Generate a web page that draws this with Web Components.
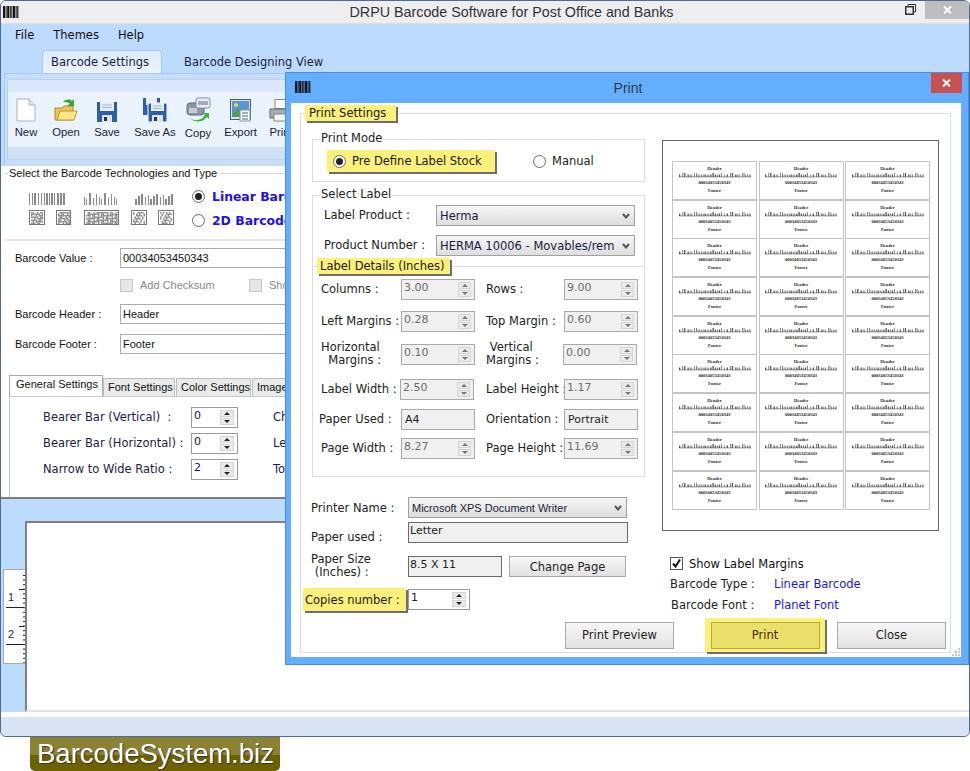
<!DOCTYPE html>
<html lang="en">
  <head>
    <meta charset="UTF-8" />
    <title>DRPU Barcode Software for Post Office and Banks</title>
    <style>
      body { margin: 0; background: #fff; overflow: hidden; }
    </style>
  </head>
  <body>
    <app-window></app-window>
    <site-mark>BarcodeSystem.biz</site-mark>
    <print-dialog></print-dialog>

    <script>
      const part = (tag, render) =>
        customElements.define(
          tag,
          class extends HTMLElement {
            connectedCallback() {
              if (this.shadowRoot) return
              this.attachShadow({ mode: 'open' }).innerHTML = render(this)
            }
          },
        )
      const VERDANA = '"DejaVu Sans", sans-serif'
      const TAHOMA = '"Liberation Sans", sans-serif'

      part('bar-mark', () => {
        let bars = ''
        let widths = [2, 1, 2, 1, 1, 2, 1, 1, 2, 1, 1]
        let x = 0
        for (let w of widths) {
          bars += `<rect x="${x}" width="${w}" height="12"/>`
          x += w + 0.6
        }
        return `<style>:host{display:inline-flex}</style>
          <svg width="16" height="12" viewBox="0 0 16 12" fill="#111">${bars}</svg>`
      })

      part('win-close', () => `<style>
          :host{display:flex;align-items:center;justify-content:center;width:var(--w,31px);height:var(--h,20px);background:var(--bg,#c75050)}
        </style>
        <svg width="9" height="8" viewBox="0 0 9 8"><path d="M1 0.5L8 7.5M8 0.5L1 7.5" stroke="#fff" stroke-width="2"/></svg>`)

      part('tool-button', el => `<style>
          :host{display:flex;flex-direction:column;align-items:center;width:${el.getAttribute('w')}px;flex:none;overflow:visible}
          .icon{height:26px;display:flex;align-items:flex-end;justify-content:center}
          .text{margin-top:${el.getAttribute('gap') || 3}px;font:11.3px/15px ${TAHOMA};color:#1b1b3a;white-space:nowrap}
        </style>
        <div class="icon"><slot name="icon"></slot></div>
        <div class="text">${el.getAttribute('label')}</div>`)

      // small grey symbology previews in the barcode type chooser
      part('bar-sample', el => {
        let w = +el.getAttribute('w')
        let kind = el.getAttribute('kind')
        let seed = +el.getAttribute('seed') || 3
        let shapes = ''
        let next = () => (seed = (seed * 7 + 5) % 31)
        if (kind === 'linear') {
          let x = 0
          while (x < w) {
            let bw = 1 + (next() % 2)
            let h = el.hasAttribute('uneven') ? 6 + (next() % 7) : 12
            shapes += `<rect x="${x}" y="${12 - h}" width="${bw}" height="${h}"/>`
            x += bw + 1 + (next() % 2)
          }
          return `<style>:host{display:block;height:12px}svg{display:block}</style>
            <svg width="${w}" height="12" fill="#8a8a8a">${shapes}</svg>`
        }
        for (let y = 2; y < 13; y += 1.5) {
          for (let x = 2; x < w - 2; x += 1.5) {
            if (next() % 3) shapes += `<rect x="${x}" y="${y}" width="1.5" height="1.5"/>`
          }
        }
        return `<style>:host{display:block;height:15px}svg{display:block}</style>
          <svg width="${w}" height="15" fill="#8a8a8a"><rect x=".5" y=".5" width="${w - 1}" height="14" fill="#fff" stroke="#777"/>${shapes}</svg>`
      })

      part('radio-dot', el => `<style>
          :host{display:inline-flex;align-items:center;justify-content:center;box-sizing:border-box;width:13px;height:13px;border:1px solid #6a6a6a;border-radius:50%;background:#fff;flex:none}
          i{width:7px;height:7px;border-radius:50%;background:#222}
        </style>${el.hasAttribute('checked') ? '<i></i>' : ''}`)

      part('check-mark', el => `<style>
          :host{display:inline-flex;box-sizing:border-box;width:13px;height:13px;border:1px solid ${el.hasAttribute('checked') ? '#555' : '#c8c8c8'};background:${el.hasAttribute('checked') ? '#fff' : '#e6e6e6'};flex:none}
          svg{display:block}
        </style>${el.hasAttribute('checked') ? '<svg width="11" height="11" viewBox="0 0 11 11"><path d="M2 5.5L4.5 8.5L9 1.5" fill="none" stroke="#111" stroke-width="2"/></svg>' : ''}`)

      part('spin-box', el => {
        let off = el.hasAttribute('disabled')
        return `<style>
          :host{display:flex;box-sizing:border-box;width:${el.getAttribute('w') || 74}px;height:${el.getAttribute('h') || 21}px;border:1px solid ${off ? '#a9a9a9' : '#9a9a9a'};background:${off ? '#f0f0f0' : '#fff'};font:11px/14px ${VERDANA};color:${off ? '#6d6d6d' : '#20104a'}}
          .v{flex:1;padding:1px 1px 0 2px;overflow:hidden}
          .b{width:${off ? 13 : 14}px;margin:2px 3px 2px 0;display:flex;flex-direction:column;gap:1px}
          .b i{flex:1;display:flex;align-items:center;justify-content:center;background:#ebebeb;border:1px solid #d4d4d4;box-sizing:border-box}
          .u{border-left:3px solid transparent;border-right:3px solid transparent;border-bottom:3px solid ${off ? '#777' : '#222'}}
          .d{border-left:3px solid transparent;border-right:3px solid transparent;border-top:3px solid ${off ? '#777' : '#222'}}
        </style>
        <div class="v">${el.getAttribute('value')}</div>
        <div class="b"><i><span class="u"></span></i><i><span class="d"></span></i></div>`
      })

      part('combo-box', el => `<style>
          :host{display:flex;align-items:center;box-sizing:border-box;height:21px;width:${el.getAttribute('w')}px;border:1px solid #a0a0a0;background:linear-gradient(#f6f6f6,#dedede);font:${el.getAttribute('font') || `11.5px ${VERDANA}`};color:#1a1a3a}
          .v{flex:1;padding-left:3px;white-space:nowrap;overflow:hidden}
          svg{margin:0 4px 0 6px;flex:none}
        </style>
        <div class="v">${el.getAttribute('value')}</div>
        <svg width="8" height="6" viewBox="0 0 8 6"><path d="M1 1L4 4.5L7 1" fill="none" stroke="#555" stroke-width="2"/></svg>`)

      part('read-field', el => `<style>
          :host{display:block;box-sizing:border-box;height:21px;width:${el.getAttribute('w')}px;border:1px solid ${el.getAttribute('line') || '#6a6a6a'};background:#f0f0f0;padding:${el.getAttribute('pad') || '1px 1px'};font:11px/14px ${VERDANA};color:#222;white-space:nowrap}
        </style><slot></slot>`)

      part('push-button', el => `<style>
          :host{display:flex;align-items:center;justify-content:center;box-sizing:border-box;width:${el.getAttribute('w')}px;height:${el.getAttribute('h') || 27}px;border:1px solid #a8a8a8;background:linear-gradient(#f7f7f7,#e2e2e2);font:11.5px ${VERDANA};color:#222}
          :host([hot]){border-color:#b5a93c;background:#ece06c;color:#4a2a00}
        </style><slot></slot>`)

      // yellow call-out used in the screenshot to point at a control
      part('note-tag', el => `<style>
          :host{display:flex;align-items:center;box-sizing:border-box;width:fit-content;background:#fbf079;box-shadow:2px 2px 0 #6e6e6e;padding:${el.getAttribute('pad') || '0 4px'};height:${el.getAttribute('h') || 16}px;font:11.5px ${VERDANA};color:#1a1a1a;white-space:nowrap}
        </style><slot></slot>`)

      part('group-box', el => `<style>
          :host{display:block;box-sizing:border-box;border:1px solid #dcdcdc;background:#fff}
          .legend{width:fit-content;height:16px;margin:-9px 0 0 8px;padding:0 1px 0 0;background:#fff;font:11.5px/15px ${VERDANA};color:#222}
        </style>
        <div class="legend"><slot name="legend">${el.getAttribute('legend') || ''}</slot></div>
        <slot></slot>`)

      part('sheet-label', () => {
        let bars = ''
        let seed = 5
        for (let x = 0; x < 72; ) {
          seed = (seed * 7 + 3) % 23
          let w = seed % 3 ? 0.7 : 1.3
          bars += `<rect x="${x}" y="${seed % 4 ? 1.5 : 0}" width="${w}" height="${seed % 4 ? 2.5 : 4}"/>`
          x += w + 0.7 + (seed % 5 === 0 ? 1.4 : 0.3)
        }
        return `<style>
          :host{display:flex;flex-direction:column;align-items:center;box-sizing:border-box;border:1px solid #c4c4c4;height:39px;font:bold 4.6px/6px "Liberation Serif",serif;color:#222;padding-top:4px}
          svg{display:block;margin:1px 0 2px}
          .n{margin-bottom:2px}
        </style>
        <div>Header</div>
        <svg width="72" height="5" fill="#555"><rect y="3.4" width="72" height="1" fill="#999"/>${bars}</svg>
        <div class="n">00034053450343</div>
        <div>Footer</div>`
      })

      part('label-sheet', () => `<style>
          :host{display:block;box-sizing:border-box;width:277px;height:391px;border:1px solid #666;background:#fff;padding:20px 0 0 9px}
          .grid{display:grid;grid-template-columns:repeat(3,85px);column-gap:1.5px;grid-auto-rows:38.7px}
        </style>
        <div class="grid">${'<sheet-label></sheet-label>'.repeat(27)}</div>`)

      part('ruler-strip', () => {
        let ticks = ''
        for (let y = 5; y < 94; y += 4.6) ticks += `<rect x="19" y="${y}" width="2" height="1"/>`
        return `<style>:host{display:block;box-sizing:border-box;width:22px;height:95px;border:1px solid #aaa;border-right:0;background:#fff;flex:none}svg{display:block}</style>
          <svg width="21" height="93" font-family="Liberation Sans, sans-serif" font-size="11" fill="#222">
            ${ticks}
            <rect x="15" y="19" width="5" height="1"/><rect x="15" y="56" width="5" height="1"/>
            <rect x="2" y="37" width="18" height="1"/><rect x="2" y="74" width="18" height="1"/>
            <text x="4" y="31">1</text><text x="4" y="68">2</text>
          </svg>`
      })

      part('site-mark', () => `<style>
          :host{display:block;box-sizing:border-box;width:250px;height:34px;margin-left:30px;padding-left:7px;border-radius:0 0 5px 5px;background:linear-gradient(#8b8233 0 53%,#6e6200 53%);font:27.5px/33px ${TAHOMA};color:#fff;text-shadow:1px 1px 1px #333}
        </style><slot></slot>`)

      part('settings-pane', () => `<style>
          :host{display:block;box-sizing:border-box;height:333px;background:#fff;border-bottom:2px solid #7f7f7f;font:11px ${TAHOMA};color:#222;overflow:hidden;position:relative}
          .type{box-sizing:border-box;height:75px;border-bottom:2px solid #e6e6e6;margin-left:4px;padding-top:7px;border-top:0}
          .legend{display:flex;align-items:center;height:0;font:11px ${TAHOMA};color:#111}
          .legend span{padding:0 3px 0 1px}
          .legend i{flex:1;height:1px;background:#d5d5d5}
          .legend b{width:3px;height:1px;background:#d5d5d5}
          .choices{display:flex;margin:20px 0 0 24px}
          .samples{width:164px}
          .s-row{display:flex;margin-bottom:5px}
          .kinds{margin:-6px 0 0 -1px;font:bold 12.4px ${VERDANA};color:#1c10f0}
          .kinds div{display:flex;align-items:center;gap:7px;height:18px;margin-bottom:6px;white-space:nowrap}
          .fields{display:grid;grid-template-columns:105px 1fr;padding:7px 0 0 14px;font-size:11px}
          .label{height:20px;line-height:20px;color:#111}
          .input{box-sizing:border-box;height:20px;width:400px;border:1px solid #acacac;padding:0 2px;line-height:18px;color:#111}
          .checks{display:flex;align-items:center;height:24px;margin:5px 0 7px;color:#888}
          .checks check-mark{margin-right:7px}
          .gap{margin-bottom:10px}
          .tabs{display:flex;align-items:flex-end;height:21px;margin:21px 0 0 8px;font:11px ${TAHOMA};color:#111}
          .tab{box-sizing:border-box;height:18px;background:#eaeaea;border:1px solid #bdbdbd;border-bottom:0;margin-right:1px;padding:2px 4px;white-space:nowrap}
          .tab.on{height:21px;width:94px;background:#fff;border-color:#aaa;margin-right:0;padding:2px 6px}
          .panel{height:110px;margin-left:8px;border-left:1px solid #c8c8c8;border-top:1px solid #c8c8c8;padding:10px 0 0 33px;font:11.5px/20px ${VERDANA};color:#231a44;display:grid;grid-template-columns:148px 82px 60px;grid-auto-rows:26px;white-space:nowrap}
        </style>
        <div class="type">
          <div class="legend"><b></b><span>Select the Barcode Technologies and Type</span><i></i></div>
          <div class="choices">
            <div class="samples">
              <div class="s-row" style="gap:18px">
                <bar-sample kind="linear" w="37" seed="4"></bar-sample>
                <bar-sample kind="linear" w="33" seed="9" uneven></bar-sample>
                <bar-sample kind="linear" w="40" seed="2" uneven></bar-sample>
              </div>
              <div class="s-row">
                <bar-sample kind="square" w="16" seed="3"></bar-sample>
                <bar-sample kind="square" w="15" seed="8" style="margin-left:11px"></bar-sample>
                <bar-sample kind="square" w="35" seed="13" style="margin-left:13px"></bar-sample>
                <bar-sample kind="square" w="16" seed="6" style="margin-left:12px"></bar-sample>
                <bar-sample kind="square" w="16" seed="11" style="margin-left:11px"></bar-sample>
              </div>
            </div>
            <div class="kinds">
              <div><radio-dot checked></radio-dot>Linear Barcode</div>
              <div><radio-dot></radio-dot>2D Barcode</div>
            </div>
          </div>
        </div>
        <div class="fields">
          <div class="label">Barcode Value :</div><div class="input">00034053450343</div>
          <div></div>
          <div class="checks"><check-mark></check-mark><span style="width:109px">Add Checksum</span><check-mark></check-mark><span>Show</span></div>
          <div class="label gap">Barcode Header :</div><div class="input gap">Header</div>
          <div class="label">Barcode Footer :</div><div class="input">Footer</div>
        </div>
        <div class="tabs">
          <div class="tab on">General Settings</div>
          <div class="tab" style="width:72px">Font Settings</div>
          <div class="tab" style="width:75px">Color Settings</div>
          <div class="tab">Image</div>
        </div>
        <div class="panel">
          <div>Bearer Bar (Vertical)&nbsp; :</div><spin-box value="0" w="47"></spin-box><div>Check</div>
          <div>Bearer Bar (Horizontal) :</div><spin-box value="0" w="47"></spin-box><div>Left</div>
          <div>Narrow to Wide Ratio :</div><spin-box value="2" w="47"></spin-box><div>Top</div>
        </div>`)

      part('app-window', () => `<style>
          :host{display:flex;flex-direction:column;box-sizing:border-box;width:970px;height:737px;border:1px solid #4a6b9b;border-radius:6px 6px 6px 6px;overflow:hidden;background:#bddbff;font:11px ${VERDANA}}
          .title{display:grid;grid-template-columns:1fr auto 1fr;align-items:center;height:22px;background:#eee;border-bottom:0;font:14.3px ${TAHOMA};color:#333;padding-left:1px}
          .title span{margin-left:52px}
          .title>div{display:flex;align-items:flex-start;justify-content:flex-end;height:100%}
          .restore{margin:3px 9px 0 0}
          .menu{display:flex;height:27px;padding:4px 0 0 14px;box-sizing:border-box;font:11.5px/14px ${VERDANA};color:#111;gap:19px;border-top:1px solid #ddd}
          .tabs{display:flex;height:23px;padding-left:41px;color:#1c1c3c;font-size:11.5px}
          .tab{box-sizing:border-box;width:120px;height:23px;padding-right:4px;border:1px solid #a9c8ee;border-bottom:0;border-radius:3px 3px 0 0;background:linear-gradient(#dcebfd,#e9f2fd);text-align:center;line-height:23px}
          .tab2{margin-left:22px;line-height:25px;white-space:nowrap}
          .ribbon{box-sizing:border-box;height:93px;margin:0 0 0 3px;padding:5px 0 0 2px;background:#c8ddf8;border:1px solid #a9c8ee;border-right:0;border-bottom:0;border-radius:3px 0 0 0}
          .band{box-sizing:border-box;height:81px;background:linear-gradient(#dbe8f9 0 12px,#eaf2fc 12px 67px,#cfe0f7 67px);border:1px solid #b9d2f0;padding:16px 0 0 0;display:flex}
          .work{display:flex;flex:1;align-items:stretch}
          .side{width:24px;padding:70px 0 0 2px;box-sizing:border-box;flex:none}
          .canvas{flex:1;margin-top:22px;background:#fff;border:solid #808080;border-width:2px 0 0 2px;border-bottom:2px solid #e2e2e2}
          .foot{height:24px;box-sizing:border-box;background:#d8e3f3;border-top:5px solid #fdfdfd}
        </style>
        <div class="title">
          <bar-mark style="margin:0 0 0 1px;justify-self:start"></bar-mark>
          <span>DRPU Barcode Software for Post Office and Banks</span>
          <div>
            <svg class="restore" width="11" height="11" viewBox="0 0 11 11" fill="none" stroke="#333"><path d="M3 2.5V0.5H10.5V8H8.5"/><rect x="0.75" y="2.75" width="7.5" height="7.5" stroke-width="1.5"/></svg>
            <win-close style="--w:44px;--h:18px;--bg:#bdbdbd"></win-close>
          </div>
        </div>
        <div class="menu"><span>File</span><span>Themes</span><span>Help</span></div>
        <div class="tabs"><div class="tab">Barcode Settings</div><div class="tab2">Barcode Designing View</div></div>
        <div class="ribbon"><div class="band">
          <tool-button w="36" label="New">
            <svg slot="icon" width="20" height="24" viewBox="0 0 20 24"><path d="M1 1H13L19 7V23H1Z" fill="#fff" stroke="#a9b4c4"/><path d="M13 1V7H19" fill="#dfe4ea" stroke="#a9b4c4"/></svg>
          </tool-button>
          <tool-button w="44" label="Open">
            <svg slot="icon" width="24" height="24" viewBox="0 0 24 24"><path d="M1 10H8L10 8H19V22H1Z" fill="#e9c458" stroke="#b08c2a"/><path d="M3 22L6 13H23L20 22Z" fill="#fde68a" stroke="#b89630"/><path d="M9 4C12 1 16 1 18 3L20 1V8H13L16 5.5C14 4 11 4 9 4Z" fill="#3aa53a"/></svg>
          </tool-button>
          <tool-button w="38" label="Save">
            <svg slot="icon" width="20" height="20" viewBox="0 0 20 20"><path d="M0 0H20V20H0Z" fill="#2d5fa8"/><path d="M3 0H17V9H3Z" fill="#e8eef6"/><path d="M5 3H15M5 5.5H15" stroke="#9fb4cf"/><path d="M5 13H15V20H5Z" fill="#dde3ea"/><rect x="7" y="15" width="3" height="4" fill="#333"/></svg>
          </tool-button>
          <tool-button w="58" label="Save As">
            <svg slot="icon" width="24" height="24" viewBox="0 0 24 24"><path d="M0 0H17V17H0Z" fill="#2d5fa8"/><path d="M3 0H14V7H3Z" fill="#e8eef6"/><path d="M5 5H24V24H5Z" fill="#2d5fa8" stroke="#fff"/><path d="M8 5H21V13H8Z" fill="#e8eef6"/><path d="M10 8H19M10 10.5H19" stroke="#9fb4cf"/><path d="M9 17H20V24H9Z" fill="#dde3ea"/><rect x="11" y="19" width="3" height="4" fill="#333"/></svg>
          </tool-button>
          <tool-button w="28" label="Copy" gap="4">
            <svg slot="icon" width="25" height="25" viewBox="0 0 25 25"><rect x="1" y="6" width="17" height="12" rx="3" fill="#8c98a6" stroke="#5f6b78"/><path d="M4 11V16M6 11V16M8 11V16M10 11V16" stroke="#fff"/><rect x="10" y="1" width="14" height="10" rx="2" fill="#e6edf6" stroke="#7e92ac"/><path d="M13 4V8M15 4V8M17 4V8M19 4V8M21 4V8" stroke="#667"/><path d="M3 20C8 25 15 24 19 18L17 16H23V22L21 20C16 26 8 26 3 20Z" fill="#3fb23f"/></svg>
          </tool-button>
          <tool-button w="57" label="Export">
            <svg slot="icon" width="21" height="23" viewBox="0 0 21 23"><rect x="0.5" y="0.5" width="20" height="20" fill="#dbe4ee" stroke="#3b5f8f"/><rect x="2" y="2" width="17" height="16" fill="#5b93d3"/><circle cx="6" cy="6" r="2" fill="#f3d14c"/><path d="M2 16L8 9L13 14H19V18H2Z" fill="#4f9e4f"/><rect x="10" y="11" width="10" height="11" fill="#fff" stroke="#7e92ac"/><path d="M12 14H18M12 17H18M12 20H18" stroke="#3b5f8f"/></svg>
          </tool-button>
          <tool-button w="24" label="Print">
            <svg slot="icon" width="24" height="23" viewBox="0 0 24 23"><rect x="6" y="0.5" width="12" height="9" fill="#fff" stroke="#888"/><path d="M1 10H23V19H1Z" fill="#a6adb5" stroke="#666"/><rect x="5" y="15" width="14" height="7" fill="#f4f4f4" stroke="#888"/></svg>
          </tool-button>
        </div></div>
        <settings-pane></settings-pane>
        <div class="work">
          <div class="side"><ruler-strip></ruler-strip></div>
          <div class="canvas"></div>
        </div>
        <div class="foot"></div>`)

      part('print-dialog', () => `<style>
          :host{position:absolute;left:285px;top:72px;box-sizing:border-box;width:684px;height:593px;background:#64aeff;border:1px solid #4b8dd6;padding:0 7px 7px 5px;display:flex;flex-direction:column;color:#222;font:11.5px ${VERDANA}}
          .bar{display:grid;grid-template-columns:1fr auto 1fr;height:30px;flex:none;align-items:start;font:14px/30px ${TAHOMA};color:#2d3b48}
          .bar span{margin-left:4px}
          .bar bar-mark{margin:8px 0 0 4px;justify-self:start}
          .bar win-close{justify-self:end;margin-right:-1px}
          .body{position:relative;flex:1;background:#fff;padding:10px 10px 0 9px;box-sizing:border-box}
          .outer{height:540px;width:651px}
          .cols{display:flex}
          .left{width:333px;margin:18px 0 0 11px;flex:none}
          .right{width:277px;margin:19px 0 0 17px;flex:none;height:473px}
          .mode .row{display:flex;align-items:center;margin:3px 0 0 14px;height:22px}
          .mode{height:43px}
          .gap-label{margin-left:6px}
          .sel{height:71px;border-bottom:0;margin-top:13px}
          .sel-grid{display:grid;grid-template-columns:112px 199px;row-gap:9px;margin:2px 0 0 11px;line-height:21px}
          .det{height:211px}
          .det-grid{display:grid;grid-template-columns:80px 74px 11px 78px 74px;grid-template-rows:32px 33px 35px 30px 29px 21px;margin:5px 0 0 8px;line-height:21px;white-space:nowrap}
          .two{line-height:13px;margin-top:-3px}
          .print{margin:20px 0 0 -1px;display:grid;grid-template-columns:97px auto;line-height:23px}
          .flat{display:flex;gap:7px;margin-top:11px;align-items:center}
          .copies{display:flex;align-items:center;margin:9px 0 0 -9px}
          .copies spin-box{margin-left:2px}
          .below{margin:26px 0 0 8px}
          .check{display:flex;align-items:center;gap:6px;height:13px;color:#111}
          .info{display:grid;grid-template-columns:104px auto;grid-auto-rows:21px;margin-top:4px;line-height:21px}
          .blue{color:#1c10f0}
          .actions{display:flex;align-items:center;justify-content:flex-end;margin-top:5px;height:34px;padding-right:4px}
          .hot{display:flex;align-items:center;justify-content:center;box-sizing:border-box;width:120px;height:34px;background:#fbf079;box-shadow:2px 2px 0 #6e6e6e;margin:0 12px 0 31px}
          .grip{position:absolute;right:1px;bottom:1px;display:grid;grid-template-columns:repeat(3,2px);gap:1px}
          .grip i{background:#c5c5c5;width:2px;height:2px}
        </style>
        <div class="bar">
          <bar-mark></bar-mark>
          <span>Print</span>
          <win-close></win-close>
        </div>
        <div class="body">
          <group-box class="outer">
            <note-tag slot="legend" pad="0 0 0 4px" style="margin-left:-4px;width:91px">Print Settings</note-tag>
            <div class="cols">
              <div class="left">
                <group-box class="mode" legend="Print Mode">
                  <div class="row">
                    <note-tag h="22" pad="0 0 0 6px" style="width:168px">
                      <radio-dot checked></radio-dot><span class="gap-label">Pre Define Label Stock</span>
                    </note-tag>
                    <radio-dot style="margin-left:38px"></radio-dot><span class="gap-label">Manual</span>
                  </div>
                </group-box>
                <group-box class="sel" legend="Select Label">
                  <div class="sel-grid">
                    <div>Label Product :</div><combo-box w="199" value="Herma"></combo-box>
                    <div>Product Number :</div><combo-box w="199" value="HERMA 10006 - Movables/rem"></combo-box>
                  </div>
                </group-box>
                <group-box class="det">
                  <note-tag slot="legend" pad="0 5px 0 3px" style="margin-left:-4px">Label Details (Inches)</note-tag>
                  <div class="det-grid">
                    <div>Columns :</div><spin-box disabled value="3.00"></spin-box><i></i><div>Rows :</div><spin-box disabled value="9.00"></spin-box>
                    <div>Left Margins :</div><spin-box disabled value="0.28"></spin-box><i></i><div>Top Margin :</div><spin-box disabled value="0.60"></spin-box>
                    <div class="two">Horizontal<br />&nbsp;&nbsp;Margins :</div><spin-box disabled value="0.10"></spin-box><i></i><div class="two">&nbsp;Vertical<br />Margins :</div><spin-box disabled value="0.00" style="margin-left:-1px"></spin-box>
                    <div>Label Width :</div><spin-box disabled value="2.50" style="margin-left:-1px"></spin-box><i></i><div>Label Height :</div><spin-box disabled value="1.17"></spin-box>
                    <div style="margin-left:-2px">Paper Used :</div><read-field w="74" line="#a9a9a9" pad="3px 3px">A4</read-field><i></i><div>Orientation :</div><read-field w="74" line="#a9a9a9" pad="3px 3px">Portrait</read-field>
                    <div>Page Width :</div><spin-box disabled value="8.27"></spin-box><i></i><div>Page Height :</div><spin-box disabled value="11.69"></spin-box>
                  </div>
                </group-box>
                <div class="print">
                  <div style="height:21px">Printer Name :</div><combo-box w="219" value="Microsoft XPS Document Writer" font="11px Liberation Sans, sans-serif"></combo-box>
                  <div style="margin-top:12px;line-height:14px;height:13px">Paper used :</div><read-field w="220" style="margin-top:4px">Letter</read-field>
                  <div style="margin-top:10px;line-height:13px">Paper Size<br />&nbsp;(Inches) :</div>
                  <div class="flat"><read-field w="94">8.5 X 11</read-field><push-button w="117" h="21">Change Page</push-button></div>
                </div>
                <div class="copies">
                  <note-tag h="23" pad="0 0 0 2px" style="width:103px">Copies number :</note-tag>
                  <spin-box value="1" w="62"></spin-box>
                </div>
              </div>
              <div class="right">
                <label-sheet></label-sheet>
                <div class="below">
                  <div class="check"><check-mark checked></check-mark>Show Label Margins</div>
                  <div class="info">
                    <div>Barcode Type :</div><div class="blue">Linear Barcode</div>
                    <div style="margin-left:1px">Barcode Font :</div><div class="blue">Planet Font</div>
                  </div>
                </div>
              </div>
            </div>
            <div class="actions">
              <push-button w="109">Print Preview</push-button>
              <div class="hot"><push-button w="109" hot>Print</push-button></div>
              <push-button w="109">Close</push-button>
            </div>
          </group-box>
          <div class="grip"><b></b><b></b><i></i><b></b><i></i><i></i><i></i><i></i><i></i></div>
        </div>`)
    </script>
  </body>
</html>
